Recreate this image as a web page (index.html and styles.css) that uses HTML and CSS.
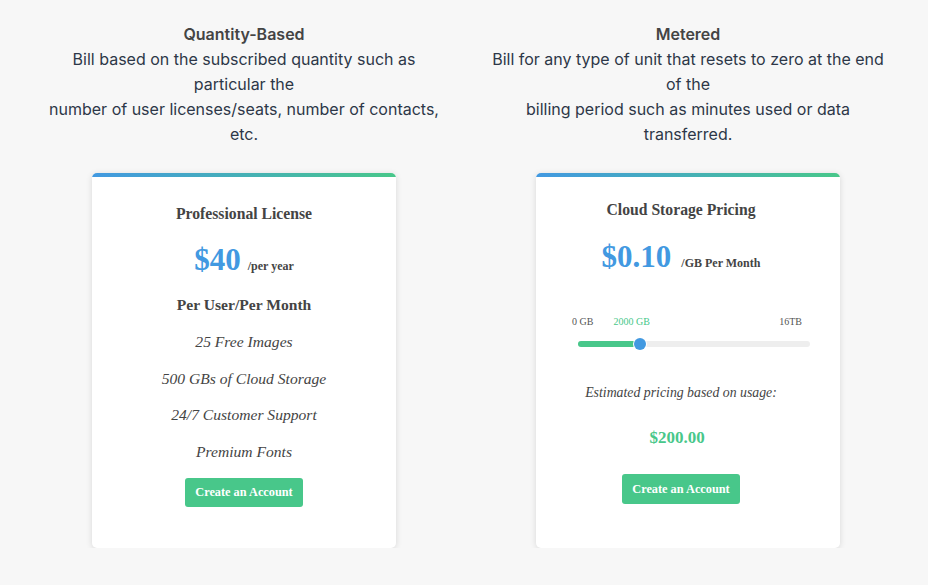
FILE: index.html
```html
<!DOCTYPE html>
<html>
<head>
<meta charset="utf-8">
<link rel="stylesheet" href="styles.css">
</head>
<body>
<div class="page">
  <section class="col">
    <h2 class="col-title">Quantity-Based</h2>
    <p class="col-desc">Bill based on the subscribed quantity such as particular the<br>number of user licenses/seats, number of contacts, etc.</p>
    <div class="card">
      <div class="card-bar"></div>
      <div class="card-body card-left">
        <h3 class="plan-name">Professional License</h3>
        <div class="price-row"><span class="price">$40</span><span class="per">/per year</span></div>
        <div class="sub">Per User/Per Month</div>
        <ul class="features">
          <li>25 Free Images</li>
          <li>500 GBs of Cloud Storage</li>
          <li>24/7 Customer Support</li>
          <li>Premium Fonts</li>
        </ul>
        <button class="btn btn-left">Create an Account</button>
      </div>
    </div>
  </section>
  <section class="col">
    <h2 class="col-title">Metered</h2>
    <p class="col-desc">Bill for any type of unit that resets to zero at the end of the<br>billing period such as minutes used or data transferred.</p>
    <div class="card">
      <div class="card-bar"></div>
      <div class="card-body card-right">
        <h3 class="plan-name">Cloud Storage Pricing</h3>
        <div class="price-row price-row-r"><span class="price">$0.10</span><span class="per per-r">/GB Per Month</span></div>
        <div class="slider-labels">
          <span>0 GB</span>
          <span class="cur">2000 GB</span>
          <span class="spacer"></span>
          <span>16TB</span>
        </div>
        <div class="track">
          <div class="fill" style="width:58px"></div>
          <div class="thumb"></div>
        </div>
        <div class="est">Estimated pricing based on usage:</div>
        <div class="total">$200.00</div>
        <button class="btn btn-right">Create an Account</button>
      </div>
    </div>
  </section>
</div>
</body>
</html>
```
FILE: styles.css
```css
* { box-sizing: border-box; }
html, body {
  margin: 0;
  padding: 0;
  background: #f7f7f7;
}
.page {
  display: grid;
  grid-template-columns: 408px 408px;
  column-gap: 36px;
  padding: 22px 40px 0;
}
.col {
  display: flex;
  flex-direction: column;
  align-items: center;
}
.col-title {
  margin: 0;
  font-family: Inter, "Liberation Sans", sans-serif;
  font-size: 16px;
  font-weight: 600;
  line-height: 25px;
  color: #444;
  text-align: center;
}
.col-desc {
  margin: 0;
  font-family: Inter, "Liberation Sans", sans-serif;
  font-size: 16px;
  line-height: 25px;
  color: #2d3748;
  text-align: center;
}
.card {
  width: 304px;
  height: 375px;
  margin-top: 26px;
  background: #fff;
  border-radius: 5px;
  box-shadow: 0 1px 6px rgba(0,0,0,0.13);
  overflow: hidden;
  display: flex;
  flex-direction: column;
}
.card-bar {
  height: 4px;
  flex: none;
  background: linear-gradient(90deg, #4299e1, #48c78a);
}
.card-body {
  display: flex;
  flex-direction: column;
  align-items: center;
  font-family: "Liberation Serif", "Times New Roman", serif;
  color: #444;
}
.card-left { padding-top: 27px; }
.card-right { padding: 23px 14px 0 0; }
.plan-name {
  margin: 0;
  font-size: 15.7px;
  font-weight: bold;
  line-height: 20px;
}
.price-row {
  margin-top: 16px;
  height: 40px;
  display: flex;
  align-items: baseline;
  justify-content: center;
  line-height: 40px;
}
.price-row-r { margin-top: 17px; }
.price {
  font-size: 31px;
  font-weight: bold;
  color: #4299e1;
}
.per {
  margin-left: 7px;
  font-size: 12px;
  font-weight: bold;
  color: #444;
}
.per-r { margin-left: 10px; }
.sub {
  margin-top: 15px;
  font-size: 15.6px;
  font-weight: bold;
  line-height: 20px;
}
.features {
  list-style: none;
  margin: 17px 0 0;
  padding: 0;
  display: flex;
  flex-direction: column;
  gap: 16.7px;
  align-items: center;
}
.features li {
  font-size: 15.6px;
  font-style: italic;
  line-height: 20px;
}
.btn {
  font-family: "Liberation Serif", "Times New Roman", serif;
  font-size: 12.3px;
  font-weight: bold;
  color: #fff;
  background: #48c78a;
  border: none;
  border-radius: 3px;
  padding: 0 10px;
  height: 29px;
  white-space: nowrap;
}
.btn-left { margin-top: 16px; }
.btn-right { margin-top: 26px; height: 30px; }
.slider-labels {
  margin-top: 38px;
  align-self: stretch;
  display: flex;
  padding: 0 24px 0 36px;
  font-size: 10px;
  line-height: 14px;
  color: #555;
}
.slider-labels .cur {
  margin-left: 20px;
  color: #48c78a;
}
.slider-labels .spacer { flex: 1; }
.track {
  position: relative;
  margin-top: 12px;
  align-self: stretch;
  margin-left: 42px;
  margin-right: 16px;
  height: 6px;
  border-radius: 3px;
  background: #eeeeee;
}
.fill {
  height: 6px;
  border-radius: 3px;
  background: #48c78a;
}
.thumb {
  position: absolute;
  left: 56px;
  top: -3px;
  width: 12px;
  height: 12px;
  border-radius: 50%;
  background: #4299e1;
  box-shadow: 0 0 0 1px #fff;
}
.est {
  margin-top: 37px;
  font-size: 13.8px;
  font-style: italic;
  line-height: 18px;
}
.total {
  margin-top: 26px;
  margin-right: 8px;
  font-size: 17px;
  font-weight: bold;
  line-height: 20px;
  color: #48c78a;
}
```
